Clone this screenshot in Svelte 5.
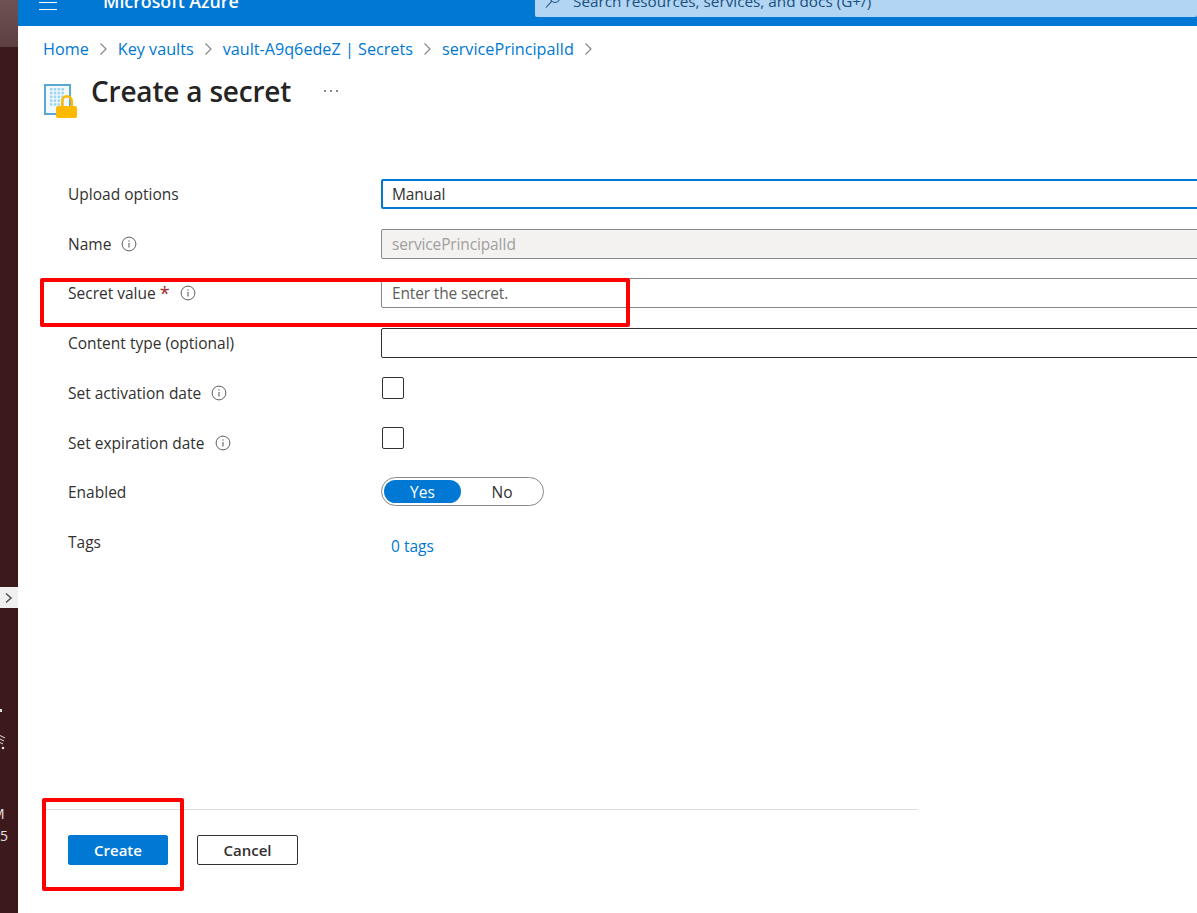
<script>
    const crumbs = ["Home", "Key vaults", "vault-A9q6edeZ | Secrets", "servicePrincipalId"];
</script>

{#snippet info()}
    <svg class="info" width="16" height="16" viewBox="0 0 16 16" fill="none" stroke="#605e5c">
        <circle cx="8" cy="8" r="6.9" />
        <path d="M8 7v4.5" stroke-width="1.1" />
        <circle cx="8" cy="5" r="0.7" fill="#605e5c" stroke="none" />
    </svg>
{/snippet}

{#snippet chevron()}
    <svg class="chev" width="9" height="14" viewBox="0 0 9 14" fill="none" stroke="#8a8886" stroke-width="1.2">
        <path d="M1.5 1.5 7 7l-5.500 5.500" />
    </svg>
{/snippet}

<div class="page">
    <aside class="strip">
        <div class="wallpaper"></div>
        <div class="expand">
            <svg width="10" height="12" viewBox="0 0 10 12" fill="none" stroke="#555" stroke-width="1.600">
                <path d="M2 1.500 7 6l-5 4.500" />
            </svg>
        </div>
        <div class="tray">
            <span class="dot"></span>
            <svg class="wifi" width="6" height="16" viewBox="0 0 6 16" fill="none" stroke="#e8e0e0" stroke-width="1">
                <path d="M0 1.500 5 4M0 5l4 2M0 8.500l3 1.500" />
                <circle cx="3" cy="14" r="1.300" fill="#e8e0e0" stroke="none" />
            </svg>
            <span class="clock">M</span>
            <span class="clock date">5</span>
        </div>
    </aside>

    <main class="main">
        <header class="topbar">
            <button class="burger" aria-label="Menu"><span></span><span></span><span></span></button>
            <span class="brand">Microsoft Azure</span>
            <div class="search">
                <svg width="16" height="16" viewBox="0 0 16 16" fill="none" stroke="#1b4f7d" stroke-width="1.100">
                    <circle cx="10" cy="5" r="4.500" />
                    <path d="M6.800 8.200 1 14.500" />
                </svg>
                <span>Search resources, services, and docs (G+/)</span>
            </div>
        </header>

        <nav class="crumbs">
            {#each crumbs as crumb}
                <a href="#top">{crumb}</a>
                {@render chevron()}
            {/each}
        </nav>

        <div class="title">
            <svg class="vault" width="36" height="36" viewBox="0 0 36 36">
                <rect x="1" y="1" width="27" height="31" fill="#59a9d3" />
                <rect x="3" y="3" width="23" height="27" fill="#f2f8fc" />
                <g fill="#9fd4f0">
                    {#each [0, 1, 2, 3, 4] as r}
                        {#each [0, 1, 2, 3] as c}
                            <rect x={7 + c * 3.800} y={5 + r * 3.800} width="2.500" height="2.500" />
                        {/each}
                    {/each}
                </g>
                <path d="M19.250 24V18a4.750 4.750 0 0 1 9.500 0V24" fill="none" stroke="#ffb900" stroke-width="2.500" />
                <rect x="13" y="23" width="21" height="12" rx="2" fill="#ffb900" />
            </svg>
            <h1>Create a secret</h1>
            <span class="more">
                <i></i><i></i><i></i>
            </span>
        </div>

        <form class="form">
            <div class="label">Upload options</div>
            <div class="control"><div class="field focused">Manual</div></div>

            <div class="label">Name {@render info()}</div>
            <div class="control"><div class="field disabled">servicePrincipalId</div></div>

            <div class="label">Secret value <span class="req">*</span> {@render info()}</div>
            <div class="control"><div class="field placeholder">Enter the secret.</div></div>

            <div class="label">Content type (optional)</div>
            <div class="control"><div class="field dark"></div></div>

            <div class="label">Set activation date {@render info()}</div>
            <div class="control"><span class="check"></span></div>

            <div class="label">Set expiration date {@render info()}</div>
            <div class="control"><span class="check"></span></div>

            <div class="label">Enabled</div>
            <div class="control">
                <div class="toggle"><span class="on">Yes</span><span class="off">No</span></div>
            </div>

            <div class="label">Tags</div>
            <div class="control"><a class="tags" href="#top">0 tags</a></div>
        </form>

        <footer class="actions">
            <div class="buttons">
                <button class="btn primary" type="button">Create</button>
                <button class="btn" type="button">Cancel</button>
            </div>
        </footer>
    </main>

    <!-- red annotation boxes drawn over the screenshot -->
    <div class="mark mark-secret"></div>
    <div class="mark mark-create"></div>
</div>

<style>
    :global(body) { margin: 0; background: #fff; overflow: hidden; }
    .page { position: relative; display: flex; height: 913px; width: 1197px; overflow: hidden; font-family: "Open Sans", "Noto Sans", sans-serif; font-size: 15.5px; color: #323130; }

    .strip { width: 18px; flex: none; background: #3c1a1b; display: flex; flex-direction: column; color: #e8e0e0; overflow: hidden; }
    .wallpaper { height: 47px; background: linear-gradient(#6e5152, #5d4040); }
    .expand { margin-top: 540px; height: 21px; background: #f0f0f0; display: flex; align-items: center; justify-content: center; }
    .tray { margin-top: 101px; display: flex; flex-direction: column; }
    .dot { width: 2px; height: 3px; background: #e8e0e0; margin-bottom: 22px; }
    .clock { font-size: 14px; line-height: 22px; margin-top: 53px; margin-left: -8px; }
    .date { margin-top: 0; margin-left: 0; }

    .main { flex: 1; min-width: 0; display: flex; flex-direction: column; }

    .topbar { height: 26px; flex: none; background: #0078d4; display: flex; align-items: flex-end; overflow: hidden; position: relative; color: #fff; }
    .burger { width: 18px; height: 16px; margin: 0 0 16px 21px; padding: 0; border: 0; background: none; display: flex; flex-direction: column; justify-content: space-between; }
    .burger span { height: 1px; background: #fff; display: block; }
    .brand { margin: 0 0 14px 46px; font-size: 17.800px; font-weight: 600; line-height: 22px; white-space: nowrap; width: 432px; flex: none; }
    .search { width: 662px; height: 32px; flex: none; margin-bottom: 9px; background: #b1d5f2; border-radius: 2px; display: flex; align-items: center; gap: 12px; padding-left: 10px; box-sizing: border-box; color: #1b4f7d; font-size: 15.300px; white-space: nowrap; }

    .crumbs { height: 20px; margin: 13px 0 0 25px; display: flex; align-items: center; gap: 10px; }
    .crumbs a { color: #0078d4; text-decoration: none; font-size: 16.200px; white-space: nowrap; }
    .chev { flex: none; }

    .title { height: 48px; margin: 9px 0 0 25px; display: flex; align-items: flex-start; }
    .vault { margin-top: 15px; flex: none; }
    h1 { margin: 3px 0 0 12px; font-size: 28px; font-weight: 600; line-height: 40px; color: #252423; white-space: nowrap; letter-spacing: -0.200px; }
    .more { margin: 22px 0 0 33px; display: flex; gap: 4px; }
    .more i { width: 2px; height: 2px; border-radius: 50%; background: #605e5c; }

    .form { margin: 63px 0 0 50px; display: grid; grid-template-columns: 313px 1fr; grid-auto-rows: 49.740px; }
    .label { height: 30px; display: flex; align-items: center; gap: 5px; white-space: nowrap; }
    .info { margin-left: 5px; flex: none; }
    .req { color: #a4262c; font-size: 18px; line-height: 14px; margin-left: -1px; }
    .control { min-width: 0; }
    .field { height: 30px; box-sizing: border-box; margin-right: -10px; border: 1px solid #8a8886; border-radius: 2px; padding: 0 10px; display: flex; align-items: center; letter-spacing: -0.150px; }
    .focused { border: 2px solid #0078d4; padding: 0 9px; color: #323130; }
    .disabled { background: #f3f2f1; color: #a19f9d; }
    .placeholder { color: #605e5c; }
    .dark { border-color: #323130; }
    .check { display: block; width: 22px; height: 22px; box-sizing: border-box; margin: 0 0 0 1px; position: relative; top: -1px; border: 1px solid #323130; border-radius: 2px; }
    .toggle { width: 163px; height: 29px; box-sizing: border-box; border: 1px solid #8a8886; border-radius: 15px; padding: 2px; display: flex; align-items: center; }
    .toggle span { height: 23px; width: 77px; display: flex; align-items: center; justify-content: center; border-radius: 12px; }
    .on { background: #0078d4; color: #fff; }
    .off { flex: 1; color: #323130; padding-left: 2px; }
    .tags { display: block; margin: 8px 0 0 10px; color: #0078d4; text-decoration: none; }

    .actions { margin-top: auto; padding-bottom: 48px; }
    .buttons { margin-left: 25px; width: 850px; border-top: 1px solid #e1dfdd; padding: 25px 0 0 25px; display: flex; gap: 29px; }
    .btn { width: 101px; height: 30px; padding: 0; box-sizing: border-box; border: 1px solid #323130; border-radius: 2px; background: #fff; color: #323130; font-family: inherit; font-size: 15px; font-weight: 600; }
    .primary { width: 100px; background: #0078d4; border-color: #0078d4; color: #fff; }

    .mark { position: absolute; box-sizing: border-box; border: 4px solid #fe0000; border-radius: 2px; pointer-events: none; }
    .mark-secret { left: 40px; top: 278px; width: 590px; height: 49px; }
    .mark-create { left: 42px; top: 798px; width: 142px; height: 93px; }
</style>
